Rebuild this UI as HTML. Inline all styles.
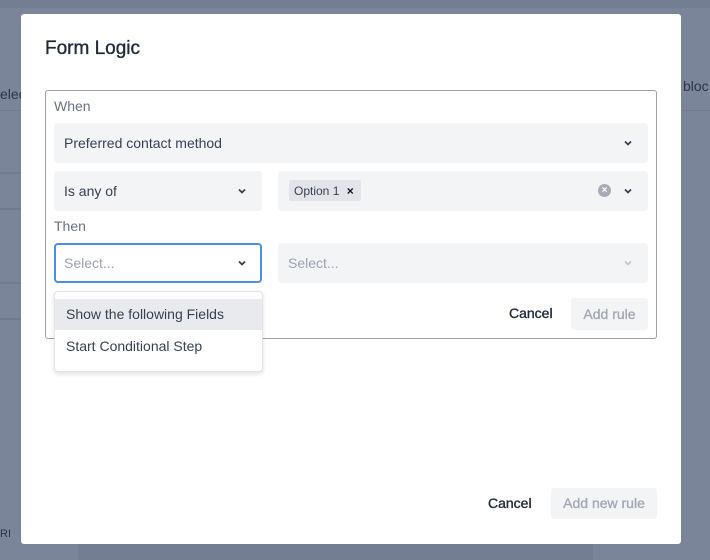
<!DOCTYPE html>
<html><head><style>
*{box-sizing:border-box;margin:0;padding:0}
body{width:710px;height:560px;overflow:hidden;background:#7b8599;font-family:"Liberation Sans",sans-serif;position:relative}
.a{position:absolute}
.sel{position:absolute;background:#f3f4f6;border-radius:4px;font-size:14px;color:#374151;display:flex;align-items:center;padding-left:10px}
.chev{position:absolute;width:12px;height:12px}
.med{-webkit-text-stroke:0.35px currentColor}
</style></head><body>
<div class="a" style="left:0;top:0;width:710px;height:8px;background:#737e92"></div>
<div class="a" style="left:0;top:86px;font-size:14px;color:#2c3648">elec</div>
<div class="a" style="left:683px;top:78px;font-size:14px;color:#2c3648">bloc</div>
<div class="a" style="left:0;top:110px;width:21px;height:1px;background:#6f7a8e"></div>
<div class="a" style="left:683px;top:110px;width:27px;height:1px;background:#6f7a8e"></div>
<div class="a" style="left:0;top:172px;width:21px;height:2px;background:#6f7a8e"></div>
<div class="a" style="left:0;top:208px;width:21px;height:2px;background:#6f7a8e"></div>
<div class="a" style="left:0;top:282px;width:21px;height:2px;background:#6f7a8e"></div>
<div class="a" style="left:0;top:318px;width:21px;height:2px;background:#6f7a8e"></div>
<div class="a" style="left:0;top:528px;font-size:11px;color:#2c3648">RI</div>
<div class="a" style="left:78px;top:544px;width:515px;height:16px;background:#737e92"></div>

<div class="a" style="left:21px;top:14px;width:660px;height:530px;background:#fff;border-radius:3px">
<div class="a med" style="left:24px;top:24px;font-size:19px;color:#1f2937">Form Logic</div>
<div class="a" style="left:24px;top:76px;width:612px;height:249px;border:1px solid #a0a0a4;border-radius:3px"></div>
</div>

<div class="a" style="left:54px;top:98px;font-size:14px;color:#6b7280">When</div>
<div class="sel" style="left:54px;top:123px;width:594px;height:40px">Preferred contact method</div>
<svg class="chev" style="left:622px;top:137px" viewBox="0 0 12 12"><path d="M3 4.5l3 3 3-3" stroke="#374151" stroke-width="1.8" fill="none"/></svg>
<div class="sel" style="left:54px;top:171px;width:208px;height:40px">Is any of</div>
<svg class="chev" style="left:236px;top:185px" viewBox="0 0 12 12"><path d="M3 4.5l3 3 3-3" stroke="#374151" stroke-width="1.8" fill="none"/></svg>
<div class="sel" style="left:278px;top:171px;width:370px;height:40px"></div>
<div class="a" style="left:289px;top:180px;width:72px;height:21px;background:#e2e4e9;border-radius:2px;font-size:12px;color:#374151;padding:4px 0 0 5px">Option 1 <span style="font-weight:bold;margin-left:4px;color:#111">×</span></div>
<div class="a" style="left:598px;top:184px;width:13px;height:13px;border-radius:50%;background:#a7abb3;color:#fff;font-size:10px;font-weight:bold;text-align:center;line-height:13px">×</div>
<svg class="chev" style="left:622px;top:185px" viewBox="0 0 12 12"><path d="M3 4.5l3 3 3-3" stroke="#374151" stroke-width="1.8" fill="none"/></svg>
<div class="a" style="left:54px;top:218px;font-size:14px;color:#6b7280">Then</div>
<div class="sel" style="left:54px;top:243px;width:208px;height:40px;background:#fff;border:2px solid #4a90e2;color:#9ca3af;padding-left:8px">Select...</div>
<svg class="chev" style="left:236px;top:257px" viewBox="0 0 12 12"><path d="M3 4.5l3 3 3-3" stroke="#374151" stroke-width="1.8" fill="none"/></svg>
<div class="sel" style="left:278px;top:243px;width:370px;height:40px;color:#9ca3af">Select...</div>
<svg class="chev" style="left:622px;top:257px" viewBox="0 0 12 12"><path d="M3 4.5l3 3 3-3" stroke="#c4c8cf" stroke-width="1.8" fill="none"/></svg>

<div class="a" style="left:54px;top:291px;width:209px;height:81px;background:#fff;border:1px solid #e2e4e8;border-radius:4px;box-shadow:0 2px 5px rgba(0,0,0,.12)"></div>
<div class="a" style="left:55px;top:299px;width:207px;height:31px;background:#e9eaee"></div>
<div class="a" style="left:66px;top:306px;font-size:14px;color:#374151">Show the following Fields</div>
<div class="a" style="left:66px;top:338px;font-size:14px;color:#374151">Start Conditional Step</div>

<div class="a med" style="left:509px;top:305px;font-size:14px;color:#1f2937">Cancel</div>
<div class="a med" style="left:571px;top:298px;width:77px;height:32px;background:#f3f4f6;border-radius:3px;font-size:14px;color:#a3a9b3;text-align:center;line-height:32px">Add rule</div>
<div class="a med" style="left:488px;top:495px;font-size:14px;color:#1f2937">Cancel</div>
<div class="a med" style="left:551px;top:488px;width:106px;height:31px;background:#f3f4f6;border-radius:3px;font-size:14px;color:#a3a9b3;text-align:center;line-height:31px">Add new rule</div>
</body></html>
